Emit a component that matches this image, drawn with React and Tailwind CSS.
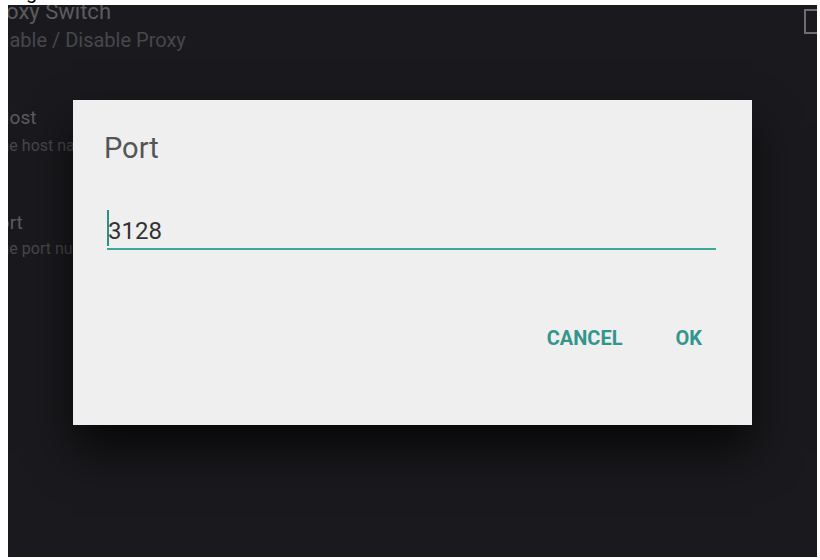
import React from "react";

const rows = [
  {
    title: "Proxy Switch",
    sub: "Enable / Disable Proxy",
    rowClass: "h-[107px]",
    titleClass: "-ml-[23px] text-[22px] leading-[26px]",
    subClass: "-ml-[21px] mt-[3px] text-[20px] leading-[24px]",
    check: true,
  },
  {
    title: "Host",
    sub: "The host name of proxy",
    rowClass: "h-[105px]",
    titleClass: "-ml-[12px] text-[19px] leading-[24px]",
    subClass: "-ml-[17px] mt-[6px] text-[16px] leading-[20px]",
  },
  {
    title: "Port",
    sub: "The port number",
    rowClass: "h-[105px]",
    titleClass: "-ml-[21px] text-[19px] leading-[24px]",
    subClass: "-ml-[17px] mt-[4px] text-[16px] leading-[20px]",
  },
];

const PortDialog = () => {
  return (
    <div className="absolute left-[65px] top-[95px] w-[679px] h-[325px] bg-[#efefef] shadow-[0_26px_44px_rgba(0,0,0,0.7)] flex flex-col pt-[31px] pl-[31px] pr-[36px]">
      <h2 className="text-[29px] leading-[34px] text-[#555555]">Port</h2>

      {/* input */}
      <div className="mt-[43px] ml-[3px] h-[42px] flex items-end border-b-2 border-[#3aa89c]">
        <div className="w-[2px] h-[36px] mb-[2px] bg-[#2f8f84]" />
        <span className="-ml-[1px] pb-[3px] text-[24px] leading-[28px] text-[#333333]">3128</span>
      </div>

      {/* buttons */}
      <div className="mt-[76px] flex justify-end gap-[53px] pr-[14px] text-[20px] leading-[24px] font-bold text-[#33968c]">
        <button type="button">CANCEL</button>
        <button type="button">OK</button>
      </div>
    </div>
  );
};

const App = () => {
  return (
    <div className="w-[820px] h-[560px] bg-white font-['Roboto',sans-serif] overflow-hidden">
      {/* text peeking above the panel */}
      <div className="h-[5px] overflow-hidden pl-[26px]">
        <div className="-mt-[20px] text-[20px] leading-[24px] text-black">g</div>
      </div>

      <div className="relative ml-[8px] w-[809px] h-[552px] bg-[#1a1a1e] overflow-hidden">
        <div className="-mt-[6px] flex flex-col">
          {rows.map((row) => (
            <div key={row.title} className={`${row.rowClass} flex justify-between`}>
              <div className="flex flex-col whitespace-nowrap">
                <span className={`${row.titleClass} text-[#5c5c60]`}>{row.title}</span>
                <span className={`${row.subClass} text-[#47474c]`}>{row.sub}</span>
              </div>
              {row.check && (
                <div className="mt-[10px] -mr-[5px] w-[18px] h-[25px] border-2 border-[#6e6e72]" />
              )}
            </div>
          ))}
        </div>

        <PortDialog />
      </div>
    </div>
  );
};

export default App;
